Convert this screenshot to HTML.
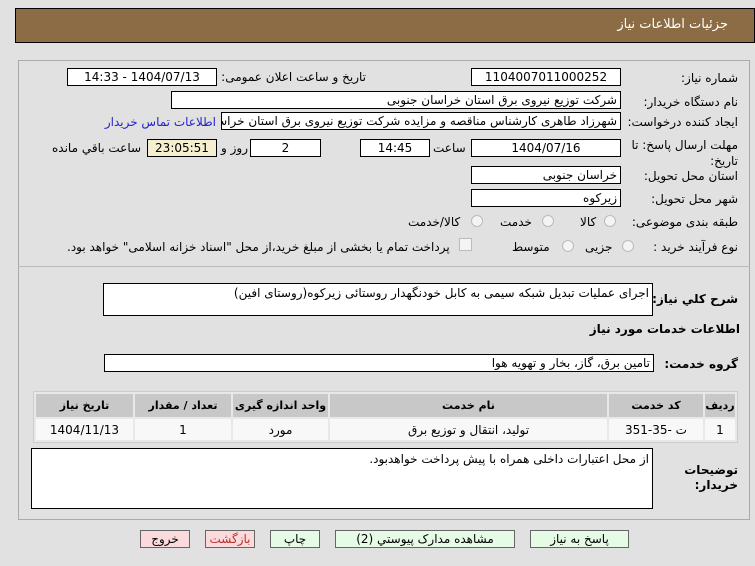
<!DOCTYPE html>
<html><head><meta charset="utf-8"><style>
*{box-sizing:border-box;margin:0;padding:0}
body{width:755px;height:566px;background:#e1e1e1;font-family:Tahoma,"DejaVu Sans","Noto Sans CJK SC",sans-serif;font-size:12px;color:#000;position:relative;overflow:hidden;direction:rtl}
.a{position:absolute;white-space:nowrap}
.box{position:absolute;background:#fff;border:1px solid #000;height:18px;line-height:16px;padding:0 3px;overflow:hidden;white-space:nowrap}
.c{text-align:center}
.lbl{position:absolute;white-space:nowrap;line-height:16px}
.rad{position:absolute;width:12px;height:12px;border-radius:50%;border:1px solid #bbb;background:#f4f4f4}
.btn{position:absolute;top:530px;height:18px;border:1px solid #666;text-align:center;line-height:16px;font-size:12px}
table{position:absolute;left:33px;top:391px;width:705px;border-collapse:separate;border-spacing:2px;background:#e8e8e8;border:1px solid #ccc}
th{background:#c8c8c8;height:23px;font-weight:bold;font-size:11px}
td{background:#f8f8f8;height:21px;text-align:center}
</style></head><body>
<div class="a" style="left:15px;top:8px;width:740px;height:35px;background:#8b6c45;border:1px solid #000"></div>
<div class="a" style="right:27px;top:17px;color:#fff;font-size:13px">جزئیات اطلاعات نیاز</div>
<div class="a" style="left:18px;top:60px;width:732px;height:460px;border:1px solid #aaa"></div>
<div class="a" style="left:18px;top:266px;width:732px;height:1px;background:#bbb"></div>

<div class="lbl" style="right:17px;top:70px">شماره نیاز:</div>
<div class="box c" style="left:471px;top:68px;width:150px">1104007011000252</div>
<div class="lbl" style="right:389px;top:69px">تاریخ و ساعت اعلان عمومی:</div>
<div class="box c" style="left:67px;top:68px;width:150px">1404/07/13 - 14:33</div>

<div class="lbl" style="right:17px;top:94px">نام دستگاه خریدار:</div>
<div class="box" style="left:171px;top:91px;width:450px">شرکت توزیع نیروی برق استان خراسان جنوبی</div>

<div class="lbl" style="right:17px;top:114px">ایجاد کننده درخواست:</div>
<div class="box" style="left:221px;top:112px;width:400px">شهرزاد طاهری کارشناس مناقصه و مزایده شرکت توزیع نیروی برق استان خراسان جنوبی</div>
<div class="lbl" style="right:539px;top:114px;color:#2323d0">اطلاعات تماس خریدار</div>

<div class="lbl" style="right:17px;top:137px;width:110px;line-height:16px;white-space:normal">مهلت ارسال پاسخ: تا تاریخ:</div>
<div class="box c" style="left:471px;top:139px;width:150px">1404/07/16</div>
<div class="lbl" style="left:433px;top:140px">ساعت</div>
<div class="box c" style="left:360px;top:139px;width:70px">14:45</div>
<div class="box c" style="left:250px;top:139px;width:71px">2</div>
<div class="lbl" style="left:220px;top:140px;width:28px;text-align:right">روز و</div>
<div class="box c" style="left:147px;top:139px;width:70px;background:#f3efcf">23:05:51</div>
<div class="lbl" style="left:52px;top:140px">ساعت باقي مانده</div>

<div class="lbl" style="right:17px;top:168px">استان محل تحویل:</div>
<div class="box" style="left:471px;top:166px;width:150px">خراسان جنوبی</div>
<div class="lbl" style="right:17px;top:191px">شهر محل تحویل:</div>
<div class="box" style="left:471px;top:189px;width:150px">زیرکوه</div>

<div class="lbl" style="right:17px;top:214px">طبقه بندی موضوعی:</div>
<div class="rad" style="left:604px;top:215px"></div><div class="lbl" style="left:580px;top:214px">کالا</div>
<div class="rad" style="left:542px;top:215px"></div><div class="lbl" style="left:500px;top:214px">خدمت</div>
<div class="rad" style="left:471px;top:215px"></div><div class="lbl" style="left:408px;top:214px">کالا/خدمت</div>

<div class="lbl" style="right:17px;top:239px">نوع فرآیند خرید :</div>
<div class="rad" style="left:622px;top:240px"></div><div class="lbl" style="left:585px;top:239px">جزیی</div>
<div class="rad" style="left:562px;top:240px"></div><div class="lbl" style="left:512px;top:239px">متوسط</div>
<div class="a" style="left:459px;top:238px;width:13px;height:13px;border:1px solid #bbb;background:#f4f4f4"></div>
<div class="lbl" style="left:67px;top:239px">پرداخت تمام یا بخشی از مبلغ خرید،از محل "اسناد خزانه اسلامی" خواهد بود.</div>

<div class="lbl" style="right:17px;top:291px;font-weight:bold">شرح کلي نیاز:</div>
<div class="box" style="left:103px;top:283px;width:550px;height:33px;line-height:18px">اجرای عملیات تبدیل شبکه سیمی به کابل خودنگهدار روستائی زیرکوه(روستای افین)</div>
<div class="lbl" style="right:15px;top:321px;font-weight:bold">اطلاعات خدمات مورد نیاز</div>
<div class="lbl" style="right:17px;top:356px;font-weight:bold">گروه خدمت:</div>
<div class="box" style="left:104px;top:354px;width:550px">تامین برق، گاز، بخار و تهویه هوا</div>

<table><tr><th style="width:30px">ردیف</th><th style="width:94px">کد خدمت</th><th>نام خدمت</th><th style="width:95px">واحد اندازه گیری</th><th style="width:96px">تعداد / مقدار</th><th style="width:97px">تاریخ نیاز</th></tr>
<tr><td>1</td><td>ت -35-351</td><td>تولید، انتقال و توزیع برق</td><td>مورد</td><td>1</td><td>1404/11/13</td></tr></table>

<div class="lbl" style="right:17px;top:463px;font-weight:bold;line-height:15px;text-align:right">توضیحات<br>خریدار:</div>
<div class="box" style="left:31px;top:448px;width:622px;height:61px;line-height:20px">از محل اعتبارات داخلی همراه با پیش پرداخت خواهدبود.</div>

<div class="btn" style="left:530px;width:99px;background:#e6fbe6">پاسخ به نیاز</div>
<div class="btn" style="left:335px;width:180px;background:#e6fbe6">مشاهده مدارک پیوستي (2)</div>
<div class="btn" style="left:270px;width:50px;background:#e6fbe6">چاپ</div>
<div class="btn" style="left:205px;width:50px;background:#fadada;color:#b33">بازگشت</div>
<div class="btn" style="left:140px;width:50px;background:#fadada">خروج</div>
</body></html>
